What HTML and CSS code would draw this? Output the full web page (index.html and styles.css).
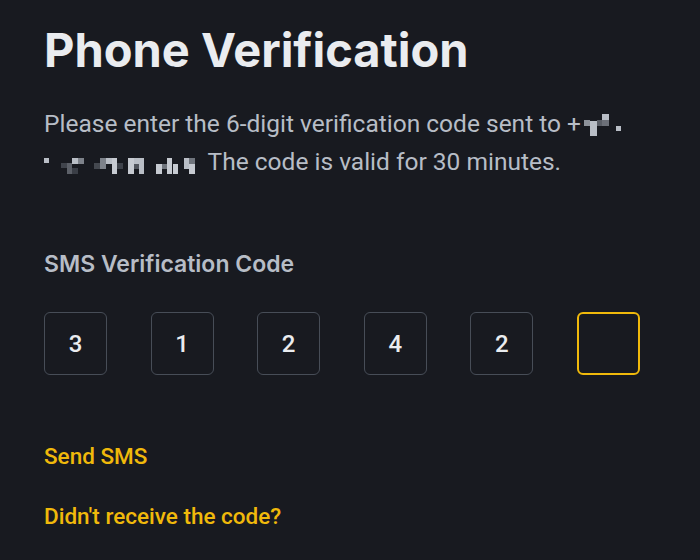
FILE: index.html
```html
<!DOCTYPE html>
<html lang="en">
<head>
<meta charset="utf-8">
<title>Phone Verification</title>
<link rel="stylesheet" href="styles.css">
</head>
<body>
<main class="page">
  <h1 class="title">Phone Verification</h1>
  <p class="desc">Please enter the 6-digit verification code sent to +<svg class="mask mask-a" width="40" height="24" viewBox="0 0 40 24" aria-hidden="true"><rect x="3" y="8" width="6" height="6" fill="#8d929a"/><rect x="9" y="9" width="7" height="15" fill="#b9bec6"/><rect x="21" y="2" width="7" height="6" fill="#b9bec6"/><rect x="21" y="8" width="7" height="6" fill="#6c7078"/><rect x="16" y="8" width="5" height="6" fill="#5a5e66"/><rect x="35" y="14" width="5" height="5" fill="#b9bec6"/></svg> <svg class="mask mask-b" width="158" height="22" viewBox="0 0 158 22" aria-hidden="true"><rect x="0" y="4" width="5" height="5" fill="#b9bec6"/><rect x="17" y="9" width="6" height="5" fill="#40444c"/><rect x="23" y="9" width="5" height="11" fill="#5c6068"/><rect x="28" y="4" width="6" height="6" fill="#b9bec6"/><rect x="34" y="4" width="6" height="6" fill="#7d828a"/><rect x="28" y="14" width="6" height="6" fill="#3a3e46"/><rect x="50" y="9" width="6" height="6" fill="#44484f"/><rect x="56" y="4" width="6" height="11" fill="#7d828a"/><rect x="62" y="4" width="6" height="6" fill="#b9bec6"/><rect x="68" y="4" width="5" height="16" fill="#c6cad1"/><rect x="73" y="9" width="6" height="6" fill="#3e424a"/><rect x="84" y="4" width="6" height="16" fill="#c6cad1"/><rect x="90" y="4" width="5" height="6" fill="#b9bec6"/><rect x="90" y="10" width="5" height="5" fill="#50545c"/><rect x="95" y="4" width="5" height="16" fill="#b9bec6"/><rect x="112" y="10" width="6" height="10" fill="#c6cad1"/><rect x="118" y="10" width="5" height="5" fill="#70757d"/><rect x="123" y="4" width="5" height="16" fill="#c6cad1"/><rect x="129" y="10" width="5" height="10" fill="#c6cad1"/><rect x="140" y="4" width="5" height="11" fill="#b9bec6"/><rect x="145" y="4" width="6" height="6" fill="#70757d"/><rect x="145" y="10" width="6" height="10" fill="#c6cad1"/></svg> The code is valid for 30 minutes.</p>

  <h2 class="label">SMS Verification Code</h2>
  <div class="code-row">
    <div class="code-box">3</div>
    <div class="code-box">1</div>
    <div class="code-box">2</div>
    <div class="code-box">4</div>
    <div class="code-box">2</div>
    <div class="code-box code-box--active"></div>
  </div>

  <a class="link link-send" href="#">Send SMS</a>
  <a class="link link-help" href="#">Didn't receive the code?</a>
</main>
</body>
</html>
```

FILE: styles.css
```css
html, body {
  margin: 0;
  padding: 0;
  background: #181a20;
}

body {
  font-family: Roboto, "Liberation Sans", sans-serif;
  color: #eaecef;
  width: 700px;
  height: 560px;
  overflow: hidden;
}

.page {
  padding: 22px 60px 0 44px;
  display: flex;
  flex-direction: column;
  align-items: flex-start;
}

.title {
  margin: 0;
  font-family: Inter, Roboto, sans-serif;
  font-size: 47px;
  line-height: 56px;
  font-weight: 700;
  color: #eaecef;
  letter-spacing: 0;
}

.desc {
  margin: 27px 0 0;
  font-size: 24.5px;
  line-height: 38px;
  font-weight: 400;
  color: #b7bdc6;
}

.mask {
  vertical-align: -4px;
}

.mask-b {
  vertical-align: -6px;
}

.label {
  margin: 67px 0 0;
  font-family: Inter, Roboto, sans-serif;
  font-size: 23px;
  line-height: 32px;
  font-weight: 600;
  color: #b7bdc6;
}

.code-row {
  margin-top: 32px;
  width: 596px;
  display: flex;
  justify-content: space-between;
}

.code-box {
  box-sizing: border-box;
  width: 63px;
  height: 63px;
  border: 1.5px solid #474d57;
  border-radius: 6px;
  display: flex;
  align-items: center;
  justify-content: center;
  font-size: 24px;
  font-weight: 500;
  color: #eaecef;
}

.code-box--active {
  border: 2px solid #f0b90b;
}

.link {
  font-size: 22.5px;
  line-height: 30px;
  font-weight: 500;
  color: #f0b90b;
  text-decoration: none;
}

.link-send {
  margin-top: 66px;
}

.link-help {
  margin-top: 30px;
}
```
